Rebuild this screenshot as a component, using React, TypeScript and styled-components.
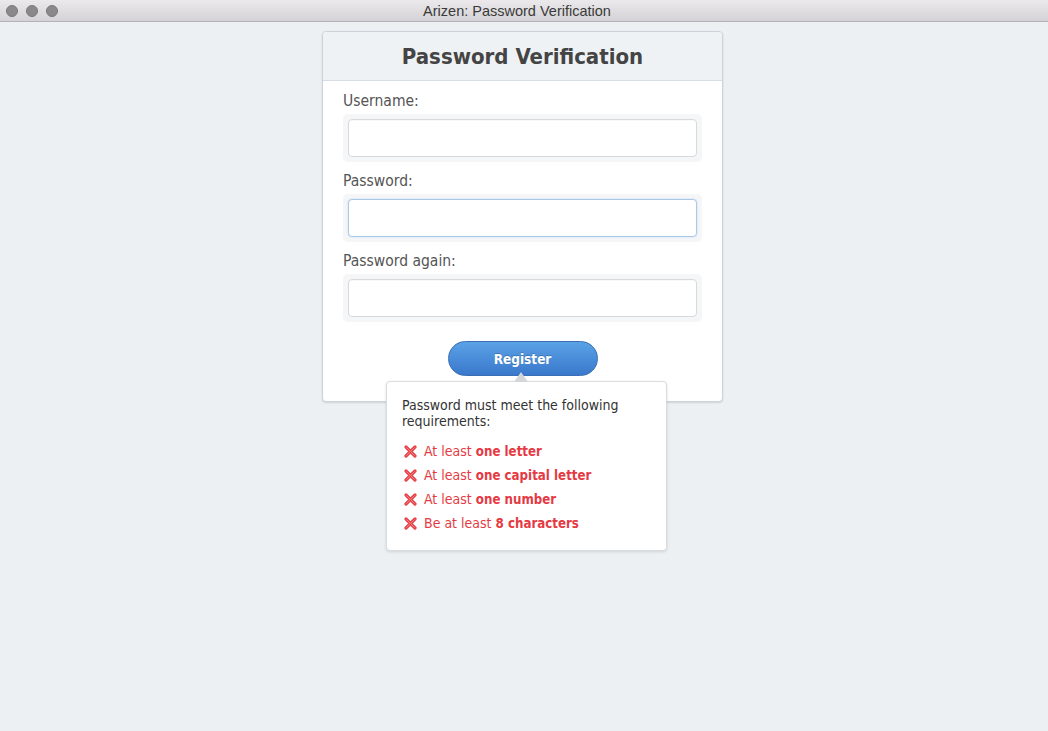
import styled, { createGlobalStyle } from "styled-components"

const GlobalStyle = createGlobalStyle`
  html, body {
    margin: 0;
    padding: 0;
    background: #edf0f3;
  }
  * {
    box-sizing: border-box;
  }
`

const fontStack = `"DejaVu Sans Condensed", "DejaVu Sans", sans-serif`

const StyledWindow = styled.div`
  width: 1048px;
  height: 731px;
  display: flex;
  flex-direction: column;
  background: #edf0f3;
  font-family: ${fontStack};
`

const StyledTitleBar = styled.div`
  height: 22px;
  flex: 0 0 22px;
  display: flex;
  align-items: center;
  background: linear-gradient(#ebe9eb, #d4d2d4);
  border-bottom: 1px solid #b4b2b4;
`

const StyledLights = styled.div`
  display: flex;
  gap: 8px;
  padding-left: 6px;
`

const StyledLight = styled.span`
  width: 12px;
  height: 12px;
  border-radius: 50%;
  background: #8a888a;
  border: 1px solid #7a787a;
`

const StyledWindowTitle = styled.div`
  flex: 1;
  text-align: center;
  margin-left: -72px;
  font-family: "Liberation Sans", Arial, sans-serif;
  font-size: 14.5px;
  color: #3a3a3a;
`

const StyledContent = styled.div`
  flex: 1;
  display: flex;
  justify-content: center;
  padding: 9px 3px 0 0;
`

const StyledCard = styled.div`
  width: 401px;
  align-self: flex-start;
  background: #ffffff;
  border: 1px solid #cbd2d9;
  border-radius: 4px;
  box-shadow: 0 1px 2px rgba(0, 0, 0, 0.12);
`

const StyledCardHeader = styled.h1`
  margin: 0;
  height: 49px;
  display: flex;
  align-items: center;
  justify-content: center;
  background: #eef2f5;
  border-bottom: 1px solid #d6dde4;
  border-radius: 4px 4px 0 0;
  font-size: 22px;
  font-weight: bold;
  color: #444444;
`

const StyledForm = styled.form`
  padding: 10px 20px 25px;
  display: flex;
  flex-direction: column;
`

const StyledLabel = styled.label`
  font-size: 15.5px;
  line-height: 20px;
  color: #555555;
  margin-bottom: 3px;
`

const StyledInputWrap = styled.div`
  background: #f5f6f7;
  border-radius: 5px;
  padding: 5px;
  margin-bottom: 9px;
`

const StyledInput = styled.input<{ $focused?: boolean }>`
  display: block;
  width: 100%;
  height: 38px;
  border: 1px solid ${({ $focused }) => ($focused ? "#a9c9e9" : "#d9d9d9")};
  border-radius: 4px;
  background: #ffffff;
  outline: none;
  box-shadow: ${({ $focused }) =>
    $focused ? "0 0 2px rgba(100, 160, 220, 0.3)" : "inset 0 1px 1px rgba(0,0,0,0.03)"};
`

const StyledButtonRow = styled.div`
  position: relative;
  display: flex;
  justify-content: center;
  margin-top: 10px;
`

const StyledButton = styled.button`
  width: 150px;
  height: 35px;
  border-radius: 18px;
  border: 1px solid #3a6fb5;
  background: linear-gradient(#5aa2e6, #3b78cc);
  color: #ffffff;
  font-family: ${fontStack};
  font-size: 13.5px;
  font-weight: bold;
  text-shadow: 0 -1px 0 rgba(0, 0, 0, 0.2);
`

const StyledTooltip = styled.div`
  position: absolute;
  top: 40px;
  left: 43px;
  width: 281px;
  padding: 15px;
  background: #ffffff;
  border: 1px solid #d8dcdf;
  border-radius: 4px;
  box-shadow: 0 1px 3px rgba(0, 0, 0, 0.12);
  color: #333333;
  font-size: 14px;

  &::before {
    content: "";
    position: absolute;
    top: -10px;
    left: 127px;
    border-left: 7px solid transparent;
    border-right: 7px solid transparent;
    border-bottom: 10px solid #d4d6d8;
  }
`

const StyledIntro = styled.div`
  line-height: 16px;
  margin-bottom: 10px;
`

const StyledList = styled.ul`
  list-style: none;
  margin: 0;
  padding: 0;
`

const StyledItem = styled.li`
  display: flex;
  align-items: center;
  gap: 7px;
  height: 24px;
  padding-left: 2px;
  color: #e53a43;
  font-size: 14px;

  b {
    font-weight: bold;
    font-size: 13.2px;
  }
`

const CrossIcon = () => (
  <svg width="13" height="13" viewBox="0 0 13 13">
    <path
      d="M2 2 L11 11 M11 2 L2 11"
      stroke="#e8464e"
      strokeWidth="3.2"
      strokeLinecap="round"
    />
    <path d="M2.5 2.5 L10.5 10.5 M10.5 2.5 L2.5 10.5" stroke="#f07c82" strokeWidth="1" />
  </svg>
)

const requirements = [
  { lead: "At least ", bold: "one letter" },
  { lead: "At least ", bold: "one capital letter" },
  { lead: "At least ", bold: "one number" },
  { lead: "Be at least ", bold: "8 characters" },
]

export default function App() {
  return (
    <>
      <GlobalStyle />
      <StyledWindow>
        <StyledTitleBar>
          <StyledLights>
            <StyledLight />
            <StyledLight />
            <StyledLight />
          </StyledLights>
          <StyledWindowTitle>Arizen: Password Verification</StyledWindowTitle>
        </StyledTitleBar>
        <StyledContent>
          <StyledCard>
            <StyledCardHeader>Password Verification</StyledCardHeader>
            <StyledForm onSubmit={(e) => e.preventDefault()}>
              <StyledLabel>Username:</StyledLabel>
              <StyledInputWrap>
                <StyledInput type="text" />
              </StyledInputWrap>
              <StyledLabel>Password:</StyledLabel>
              <StyledInputWrap>
                <StyledInput type="password" $focused />
              </StyledInputWrap>
              <StyledLabel>Password again:</StyledLabel>
              <StyledInputWrap>
                <StyledInput type="password" />
              </StyledInputWrap>
              <StyledButtonRow>
                <StyledButton type="submit">Register</StyledButton>
                <StyledTooltip>
                  <StyledIntro>Password must meet the following requirements:</StyledIntro>
                  <StyledList>
                    {requirements.map((r) => (
                      <StyledItem key={r.bold}>
                        <CrossIcon />
                        <span>
                          {r.lead}
                          <b>{r.bold}</b>
                        </span>
                      </StyledItem>
                    ))}
                  </StyledList>
                </StyledTooltip>
              </StyledButtonRow>
            </StyledForm>
          </StyledCard>
        </StyledContent>
      </StyledWindow>
    </>
  )
}
